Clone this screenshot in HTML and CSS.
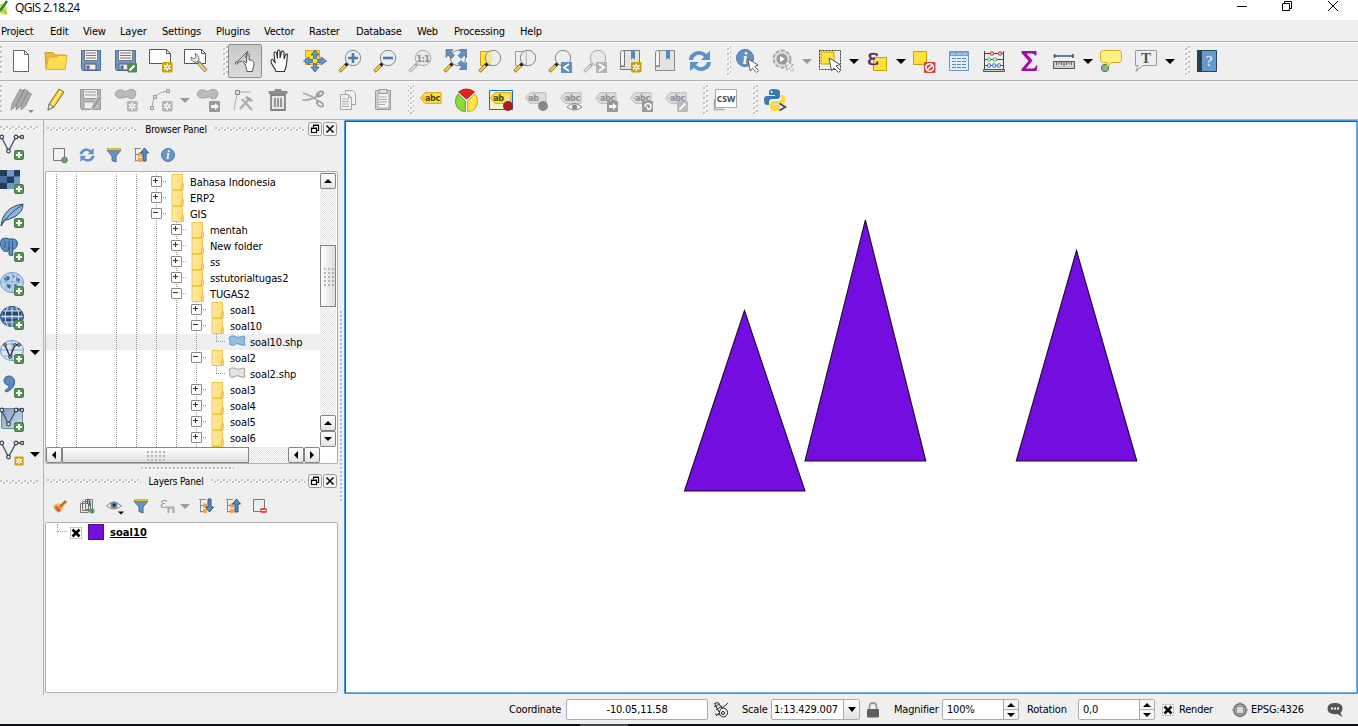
FILE: index.html
```html
<!DOCTYPE html>
<html lang="en">
<head>
<meta charset="utf-8">
<title>QGIS 2.18.24</title>
<link rel="stylesheet" href="styles.css">
</head>
<body>
<svg class="defs" width="0" height="0">
  <defs>
    <linearGradient id="g-folder" x1="0" x2="1"><stop offset="0" stop-color="#ffe9a2"/><stop offset="1" stop-color="#ffdc74"/></linearGradient>
    <linearGradient id="g-cond" x1="0" x2="1" y1="0" y2="1"><stop offset="0" stop-color="#7f9dc0"/><stop offset="1" stop-color="#d4e0ee"/></linearGradient>
    <pattern id="dots" width="6" height="5" patternUnits="userSpaceOnUse"><path fill="#fff" d="M1 1h2v2H1zM4 3h2v2H4z"/><path fill="#c2c2c2" d="M0 0h2v2H0zM3 2h2v2H3z"/></pattern>
    <pattern id="dots-1" width="4" height="4" patternUnits="userSpaceOnUse"><path fill="#fff" d="M1 1h2v2H1z"/><path fill="#bdbdbd" d="M0 0h2v2H0z"/></pattern>
    <symbol id="b-new" viewBox="0 0 12 12"><rect x=".5" y=".5" width="11" height="11" rx="1.5" fill="#c8a20c"/><path stroke="#fff" stroke-width="1.5" d="M6 2v8M2.5 4l7 4M9.5 4l-7 4"/><circle cx="6" cy="6" r="1" fill="#c8a20c"/></symbol>
    <symbol id="b-newg" viewBox="0 0 12 12"><rect x=".5" y=".5" width="11" height="11" rx="1.5" fill="#b4b4b4"/><path stroke="#fff" stroke-width="1.5" d="M6 2v8M2.5 4l7 4M9.5 4l-7 4"/><circle cx="6" cy="6" r="1" fill="#b4b4b4"/></symbol>
    <symbol id="b-plus" viewBox="0 0 10 10"><rect x=".5" y=".5" width="9" height="9" rx="1.5" fill="#589458" stroke="#457b45"/><path stroke="#fff" stroke-width="2" d="M5 2v6M2 5h6"/></symbol>
    <symbol id="lens" viewBox="0 0 24 24"><path d="M9 15 1.500 22.500" stroke="#7a6a3a" stroke-width="3.400"/><path d="M7.500 16.500 2 22" stroke="#ffc832" stroke-width="2.400"/><path d="M7.500 16.500l2.500-2.500" stroke="#222" stroke-width="3"/><circle cx="15" cy="9" r="7.700" fill="#e9eeee" fill-opacity=".85" stroke="#858585"/></symbol>
    <symbol id="lens-g" viewBox="0 0 24 24"><path d="M9 15 1.500 22.500" stroke="#a5a5a5" stroke-width="3.400"/><path d="M7.500 16.500 2 22" stroke="#ddd" stroke-width="1.800"/><circle cx="15" cy="9" r="7.700" fill="#e9e9e9" stroke="#aaa"/></symbol>
    <symbol id="cursor" viewBox="0 0 14 16"><path d="M1 1l11 6.500-4 1.500 4.500 4.500-2 2-4.500-4.500L3.500 14z" fill="#fff" stroke="#555"/></symbol>
    <symbol id="refresh" viewBox="0 0 24 24"><path d="M1 11C1 3 12-1 18 5l4-3v9h-9l3-3C12 4 6 6 5 11z" fill="#5d93c9"/><path d="M23 13c0 8-11 12-17 6l-4 3v-9h9l-3 3c4 4 10 2 11-3z" fill="#5d93c9"/></symbol>
    <symbol id="blob" viewBox="0 0 24 16"><path d="M1.500 8C0 3 6 .5 10 3c3 2 4-1.500 8-1.500 6 0 6 6 3 9-4 3-5-1-8-1-5 1.500-10 2-11.500-1.500z" fill="#bbb" stroke="#999"/></symbol>
    <symbol id="tag" viewBox="0 0 22 12"><path d="M.5 6 5 .7h16v10.600H5z"/><circle cx="4" cy="6" r=".8" fill="#fff"/></symbol>
    <symbol id="folder" viewBox="0 0 14 16"><path d="M1 .5h10.500v10l1-1v6H1z" fill="url(#g-folder)" stroke="#edc74e"/><path d="M10.500 10.500v5" stroke="#e0b840"/></symbol>
    <symbol id="vec" viewBox="0 0 24 20"><path d="M1.500 3 8.500 17 16 3h6" fill="none" stroke="#456" stroke-width="1.300"/><g fill="#dfe9f3" stroke="#345" stroke-width="1.200"><circle cx="1.800" cy="3" r="1.800"/><circle cx="8.500" cy="17" r="1.800"/><circle cx="16" cy="3" r="1.800"/><circle cx="22" cy="3" r="1.600"/></g></symbol>
    <symbol id="tree-ico" viewBox="0 0 16 16"><path d="M1 1.500h7M2.500 1v13.500M3 7.500h3M3 13.500h3" stroke="#888" fill="none"/><path d="M5 5.500h4v4H5zM5 11h4v4H5z" fill="#f3a43c"/></symbol>
    <symbol id="float" viewBox="0 0 14 14"><rect x=".5" y=".5" width="13" height="13" rx="2" fill="#f4f4f4" stroke="#999"/><path d="M5.500 5V3.500h5v5H9M5 3h6" fill="none" stroke="#000" stroke-width="1.200"/><path d="M3.500 6.500h5v4h-5zM3 6h6" fill="none" stroke="#000" stroke-width="1.200"/></symbol>
    <symbol id="close" viewBox="0 0 14 14"><rect x=".5" y=".5" width="13" height="13" rx="2" fill="#f4f4f4" stroke="#999"/><path d="M3.500 3.500l7 7m0-7l-7 7" stroke="#000" stroke-width="1.500"/></symbol>
    <symbol id="check" viewBox="0 0 12 12"><rect x=".5" y=".5" width="11" height="11" fill="#fff" stroke="#c4c4c4"/><path d="M2.500 2.500l7 7M9.500 2.500l-7 7" stroke="#000" stroke-width="2.600"/></symbol>
  </defs>
</svg>

<header class="titlebar">
  <svg class="applogo" width="10" height="16" viewBox="0 0 10 16"><path d="M0 4q4-1 6 3t0 7q-3 2-6-1z" fill="#cbe06a"/><path d="M0 11 7 1" stroke="#33802d" stroke-width="2.500"/><path d="M3 10l4 4" stroke="#b9c93c" stroke-width="2"/></svg>
  <span class="caption">QGIS 2.18.24</span>
  <svg class="wincontrols" width="110" height="14" viewBox="0 0 110 14" fill="none" stroke="#000"><path d="M1 6.500h10M46.500 3.500h7v7h-7zM48.500 3.500v-2h7v7h-2M92 1l10 10M102 1 92 11"/></svg>
</header>

<nav class="menubar">
  <span class="m49">Project</span><span class="m33">Edit</span><span class="m37">View</span><span class="m42">Layer</span><span class="m54">Settings</span><span class="m48">Plugins</span><span class="m45">Vector</span><span class="m47">Raster</span><span class="m61">Database</span><span class="m37">Web</span><span class="m66">Processing</span><span>Help</span>
</nav>

<div class="toolbar">
  <svg class="grip edge" width="4" height="30"><rect width="3" height="30" fill="url(#dots)"/></svg>
  <button class="tb"><svg viewBox="0 0 24 24"><path d="M4.500 1.500h11l4 4v17h-15z" fill="#fff" stroke="#666"/><path d="M15.500 1.500v4h4" fill="none" stroke="#666"/></svg></button>
  <button class="tb"><svg viewBox="0 0 24 24"><path d="M1 3.500h8l2 2.500h10v14H2z" fill="#e5b93a" stroke="#c8a030"/><path d="M4.500 8h8l2-1.500h8.500L21 20.500H2z" fill="#ffdc50" stroke="#dcae28"/></svg></button>
  <button class="tb"><svg viewBox="0 0 24 24"><path d="M2.500 1.500h19v20h-18l-1-2z" fill="#6f97c5" stroke="#456f9f"/><path d="M5.500 1.500h13v10h-13z" fill="#f5f5f5" stroke="#777"/><path d="M7 4h10M7 6.500h10M7 9h10" stroke="#777"/><path d="M6 15h11v6H6z" fill="#eee" stroke="#555"/><path d="M7.500 16.500h3v4h-3z" fill="#456f9f"/></svg></button>
  <button class="tb"><svg viewBox="0 0 24 24"><path d="M1.500 1.500h20v20h-19l-1-2z" fill="#6f97c5" stroke="#456f9f"/><path d="M4.500 1.500h14v10h-14z" fill="#f5f5f5" stroke="#777"/><path d="M6 4h11M6 6.500h11M6 9h11" stroke="#777"/><path d="M5 15h9v6H5z" fill="#eee" stroke="#555"/><path d="M6.500 16.500h3v4h-3z" fill="#456f9f"/><rect x="13.500" y="14" width="9.500" height="9.500" rx="1" fill="#528a52"/><path d="M15.500 21.500l5-5" stroke="#fff" stroke-width="2.200"/></svg></button>
  <button class="tb"><svg viewBox="0 0 24 24"><path d="M.5.500h17l4 4v10H.5z" fill="#fff" stroke="#555"/><path d="M17.500.500v4h4" fill="none" stroke="#555"/><use href="#b-new" x="12.500" y="12.500" width="11.500" height="11.500"/></svg></button>
  <button class="tb"><svg viewBox="0 0 24 24"><path d="M.5.500h17l4 4v10H.5z" fill="#fff" stroke="#555"/><path d="M17.500.500v4h4" fill="none" stroke="#555"/><path d="M14 13l8 9" stroke="#8a7640" stroke-width="4"/><path d="M15 14.500l6.500 7" stroke="#f0d890" stroke-width="2.200"/><path d="M7 8c0 4 3 6 6 5l2-2c0-4-2-6-4-6.500l1 4-2 1.500z" fill="#eee" stroke="#666"/></svg></button>
  <svg class="grip g14" width="14" height="30"><rect x="8" width="6" height="30" fill="url(#dots)"/></svg>
  <button class="tb pressed"><svg viewBox="0 0 24 24"><path d="M3 14 15 2M12 9l3-7M3 14l6-2" stroke="#555" fill="none" stroke-width=".9"/><circle cx="3.500" cy="14" r="1.200" fill="#fff" stroke="#555"/><path d="M12 15c-3-2-2-3.500-.5-2.500l2 1.500.5-8c.5-1.500 2-1.500 2 0v5c4 0 5 1.500 5 4 0 3-1.500 4-1.500 7.500h-5.500c-.5-3-1-5.500-2-7.500z" fill="#fff" stroke="#444" stroke-width=".9"/></svg></button>
  <button class="tb"><svg viewBox="0 0 24 24"><path d="M8 22.500c-1-4-5-7-5-10s2-3 3 0l1 1-1-9c0-2 2-2 2.500 0l1 5V2.500c0-2 2.500-2 2.500 0v6.500l1.500-6c.5-1.500 2.500-1 2.500.5V10l1.500-4c.5-1.500 2.500-1 2 .5-1 5 0 9-3 16z" fill="#fff" stroke="#333" stroke-width="1.100"/></svg></button>
  <button class="tb"><svg viewBox="0 0 24 24"><path d="M2.500 1.500h14v14h-14z" fill="#ffdc28" stroke="#d6a91a"/><path d="M12 1l4 5h-2.500v4.500H18V8l5.500 4-5.500 4v-2.500h-4.500V18H16l-4 5-4-5h2.500v-4.500H6V16L.500 12 6 8v2.500h4.500V6H8z" fill="#6a94c5" stroke="#36618f" stroke-width=".8"/><path d="M10 10h4v4h-4z" fill="#ffdc28"/></svg></button>
  <button class="tb"><svg viewBox="0 0 24 24"><use href="#lens"/><path d="M15 4v10M10 9h10" stroke="#4c79ad" stroke-width="2.600"/></svg></button>
  <button class="tb"><svg viewBox="0 0 24 24"><use href="#lens"/><path d="M10 9h10" stroke="#4c79ad" stroke-width="2.600"/></svg></button>
  <button class="tb"><svg viewBox="0 0 24 24"><use href="#lens-g"/><text class="one" x="15" y="12.500">1:1</text></svg></button>
  <button class="tb"><svg viewBox="0 0 24 24"><use href="#lens"/><path d="M3 .5h7L8 3l3.500 3.500-3 3L5 6 3 8.500zM23.500 .5h-7L18.500 3 15 6.500l3 3L21.500 6l2 2.500zM23.500 20.500h-7l2-2.500-3.500-3.500 3-3 3.500 3.500 2-2z" fill="#648fc1" stroke="#38628e" stroke-width=".6"/></svg></button>
  <button class="tb"><svg viewBox="0 0 24 24"><path d="M2.500 2.500h10v14h-10z" fill="#ffe23a" stroke="#c8a020"/><use href="#lens"/><path d="M14 2.500a6.700 6.700 0 0 0 0 13z" fill="#f3e98a"/></svg></button>
  <button class="tb"><svg viewBox="0 0 24 24"><path d="M2.500 2.500h10v14h-10z" fill="#eee" stroke="#999"/><use href="#lens"/><path d="M13.500 2.500v13" stroke="#bbb"/></svg></button>
  <button class="tb"><svg viewBox="0 0 24 24"><use href="#lens"/><path d="M13 13h11v11H13z" fill="#5f8dbf"/><path d="M21 15l-5 3.500 5 3.500" stroke="#fff" fill="none" stroke-width="1.800"/></svg></button>
  <button class="tb"><svg viewBox="0 0 24 24"><use href="#lens-g"/><path d="M13 13h11v11H13z" fill="#b5b5b5"/><path d="M16 15l5 3.500-5 3.500" stroke="#fff" fill="none" stroke-width="1.800"/></svg></button>
  <button class="tb"><svg viewBox="0 0 24 24"><path d="M6.500 1.500h15v19h-19v-3h4z" fill="#e4e4e4" stroke="#777"/><path d="M2.500 17.500v-14q0-2 2-2t2 2v14q-2-2-4 0z" fill="#f5f5f5" stroke="#777"/><path d="M13 1h4v10l-2-2-2 2z" fill="#5689bd"/><use href="#b-new" x="12.500" y="12.500" width="11.500" height="11.500"/></svg></button>
  <button class="tb"><svg viewBox="0 0 24 24"><path d="M6.500 1.500h15v20h-19v-4h4z" fill="#e4e4e4" stroke="#888"/><path d="M2.500 17.500v-14q0-2 2-2t2 2v14q-2-2-4 0z" fill="#f5f5f5" stroke="#888"/><path d="M13 1h4v10l-2-2-2 2z" fill="#5689bd"/></svg></button>
  <button class="tb"><svg viewBox="0 0 24 24"><use href="#refresh"/></svg></button>
  <svg class="grip g13" width="13" height="30"><rect x="8" width="5" height="30" fill="url(#dots)"/></svg>
  <button class="tb"><svg viewBox="0 0 24 24"><circle cx="9" cy="9" r="8.500" fill="#6292c5" stroke="#4b78aa"/><text class="info" x="9" y="14.500">i</text><use href="#cursor" x="11" y="9" width="13" height="15"/></svg></button>
  <button class="tb"><svg viewBox="0 0 24 24"><circle cx="11" cy="10" r="8.500" fill="#e0e0e0" stroke="#aaa" stroke-width="2" stroke-dasharray="4 1.500"/><circle cx="11" cy="10" r="5.500" fill="#999"/><path d="M9 7l5 3-5 3z" fill="#fff"/><use href="#cursor" x="13" y="10" width="11" height="13" opacity=".55"/></svg></button>
  <i class="drop grey"></i>
  <button class="tb"><svg viewBox="0 0 24 24"><path d="M1.500 1.500h21v19h-21z" fill="none" stroke="#333" stroke-dasharray="2 1"/><path d="M3 3h13v12H3z" fill="#ffe23a" stroke="#c7a006"/><use href="#cursor" x="10" y="8" width="14" height="16"/></svg></button>
  <i class="drop"></i>
  <button class="tb"><svg viewBox="0 0 24 24"><path d="M8.500 8.500h13v13h-13z" fill="#ffe23a" stroke="#c7a006"/><text class="eps" x="2" y="15.500">ε</text></svg></button>
  <i class="drop"></i>
  <button class="tb"><svg viewBox="0 0 24 24"><path d="M1.500 2.500h13v13h-13z" fill="#ffe23a" stroke="#c7a006"/><rect x="12" y="13" width="11.500" height="11" rx="1" fill="#d94343"/><circle cx="17.700" cy="18.500" r="3.800" fill="none" stroke="#fff" stroke-width="1.500"/><path d="M15 21l5.500-5" stroke="#fff" stroke-width="1.500"/></svg></button>
  <button class="tb"><svg viewBox="0 0 24 24"><path d="M2.500 2.500h19v19h-19z" fill="#e4eef9" stroke="#6797cc"/><path d="M3 3h18v4H3z" fill="#77a3d4"/><path d="M4 5h4.500M10 5h4.500M16 5h4" stroke="#d5e5f5"/><path d="M5 9.500h4M10 9.500h4M15 9.500h4M5 12.500h4M10 12.500h4M15 12.500h4M5 15.500h4M10 15.500h4M15 15.500h4M5 18.500h4M10 18.500h4M15 18.500h4" stroke="#5588bf"/></svg></button>
  <button class="tb"><svg viewBox="0 0 24 24"><path d="M2.500 2v19M21.500 2v19M2 4.500h20M2 10.500h20M2 16.500h20" stroke="#444"/><path d="M1.500 20.500h21v2h-21z" fill="#ccc" stroke="#555"/><g fill="#f6c4c4" stroke="#c03838"><circle cx="10" cy="4.500" r="1.800"/><circle cx="18" cy="4.500" r="1.800"/></g><g fill="#d7efd7" stroke="#5db35d"><circle cx="7" cy="10.500" r="1.800"/><circle cx="13" cy="10.500" r="1.800"/></g><g fill="#d3e3f3" stroke="#4a7bb0"><circle cx="7" cy="16.500" r="1.800"/><circle cx="12" cy="16.500" r="1.800"/><circle cx="17" cy="16.500" r="1.800"/></g></svg></button>
  <button class="tb"><svg viewBox="0 0 24 24"><path d="M4.500 2h15v4.500H18Q17.500 4.500 14.500 4.500H9.500l6 7-6.500 8h6.500q3 0 3.500-3h1.500l-1 5.500h-15V20l7-8-7-8z" fill="#a50ca5"/></svg></button>
  <button class="tb"><svg viewBox="0 0 24 24"><path d="M2 7h19M2.500 5v4M21 5v4" stroke="#36587f" stroke-width="1.600"/><path d="M1.500 12.500h21v7h-21z" fill="#cfcfcf" stroke="#555"/><path d="M4.500 13v3M7 13v2M9.500 13v3M12 13v4M14.500 13v3M17 13v2M19.500 13v3" stroke="#444" stroke-width=".8"/></svg></button>
  <i class="drop"></i>
  <button class="tb"><svg viewBox="0 0 24 24"><circle cx="6" cy="19" r="3.700" fill="#8ab58a" stroke="#548054"/><path d="M4.500 1.500h15q3 0 3 3v6q0 3-3 3h-7L8 18v-4.500H4.500q-3 0-3-3v-6q0-3 3-3z" fill="#fff084" stroke="#d0a822"/></svg></button>
  <button class="tb"><svg viewBox="0 0 24 24"><path d="M1.500 1.500h21v15H9l-7 6 2-6H1.500z" fill="#e8f0f4" stroke="#999"/><text class="tee" x="12" y="14">T</text></svg></button>
  <i class="drop"></i>
  <svg class="grip g14" width="14" height="30"><rect x="8" width="6" height="30" fill="url(#dots)"/></svg>
  <button class="tb"><svg viewBox="0 0 24 24"><path d="M2.500 1.500h19v21h-19z" fill="#6a98ca" stroke="#2f4458"/><path d="M2 1h5v22H2z" fill="#2b3e52"/><text class="help" x="14" y="17">?</text></svg></button>
</div>

<div class="toolbar second">
  <svg class="grip edge" width="4" height="30"><rect width="3" height="30" fill="url(#dots)"/></svg>
  <button class="tb"><svg viewBox="0 0 24 24"><g fill="#aaa" stroke="#888" stroke-width=".8"><path d="M2 22l1-6L11 1l4 2-8 15zM7 22l1-6L15 1l4 2-7 15zM12 22l1-6 6-12 3.500 2-6 12z"/></g><path d="M19 22h6l-3 3z" fill="#888"/></svg></button>
  <button class="tb"><svg viewBox="0 0 24 24"><path d="M4 22l1-6L15 1l5 3-10 15z" fill="#eacb3c" stroke="#8e791e"/><path d="M8 17l9-14" stroke="#fff18c" stroke-width="2"/><path d="M4 22l1-6 4.500 3z" fill="#eee" stroke="#777"/></svg></button>
  <button class="tb"><svg viewBox="0 0 24 24"><path d="M1.500 1.500h20v20h-19l-1-2z" fill="#b6b6b6" stroke="#999"/><path d="M4.500 1.500h14v9h-14z" fill="#eee" stroke="#999"/><path d="M6 4h11M6 7h11M5 14h10v7H5z" stroke="#999" fill="#eee"/><path d="M12 22l1-4 7-10 3 2-7 10z" fill="#999" stroke="#ddd" stroke-width=".7"/></svg></button>
  <button class="tb"><svg viewBox="0 0 24 24"><use href="#blob" width="23" height="15"/><use href="#b-newg" x="12.500" y="12.500" width="11.500" height="11.500"/></svg></button>
  <button class="tb"><svg viewBox="0 0 24 24"><path d="M3 20Q3 4 19 3" fill="none" stroke="#aaa"/><g fill="#ddd" stroke="#999"><path d="M1.500 18.500h3v3h-3zM4.500 7.500h3v3h-3zM17.500 1.500h3v3h-3z"/></g><use href="#b-newg" x="12.500" y="12.500" width="11.500" height="11.500"/></svg></button>
  <i class="drop grey"></i>
  <button class="tb"><svg viewBox="0 0 24 24"><use href="#blob" width="23" height="15"/><rect x="13" y="13" width="11" height="11" rx="1" fill="#999"/><path d="M15 17h4v-2l4 3.500-4 3.500v-2h-4z" fill="#fff"/></svg></button>
  <button class="tb"><svg viewBox="0 0 24 24"><path d="M3 22Q4 12 7 4h13" fill="none" stroke="#aaa"/><path d="M4.500 2.500h4v4h-4z" fill="#ddd" stroke="#888"/><path d="M11 11l10 11M19 10 9 21" stroke="#b0b0b0" stroke-width="2.400"/><path d="M15 9l6 4" stroke="#a5a5a5" stroke-width="2.600"/></svg></button>
  <button class="tb"><svg viewBox="0 0 24 24"><path d="M5 7h14v15H5z" fill="#e6e6e6" stroke="#858585" stroke-width="1.800"/><path d="M9 10v9M12 10v9M15 10v9" stroke="#858585" stroke-width="1.600"/><path d="M3 3.500h18v2H3zM9 3V1.500h6V3" fill="#999" stroke="#858585"/></svg></button>
  <button class="tb"><svg viewBox="0 0 24 24"><path d="M2 5q10 3 16 9M1 12q9 1 18-6" stroke="#aaa" stroke-width="1.700" fill="none"/><ellipse cx="19" cy="6" rx="3.500" ry="2" transform="rotate(-30 19 6)" fill="none" stroke="#999" stroke-width="1.600"/><ellipse cx="19" cy="16" rx="3.500" ry="2" transform="rotate(35 19 16)" fill="none" stroke="#999" stroke-width="1.600"/></svg></button>
  <button class="tb"><svg viewBox="0 0 24 24"><g fill="#f2f2f2" stroke="#a5a5a5"><path d="M9.500 2.500h7l3 3v11h-10z"/><path d="M4.500 6.500h8l3 3v12h-11z"/></g><path d="M6 11h7M6 13.500h7M6 16h7M6 18.500h7M12.500 6.500v3h3" fill="none" stroke="#aaa"/></svg></button>
  <button class="tb"><svg viewBox="0 0 24 24"><path d="M4.500 2.500h15v19h-15z" fill="#d0d0d0" stroke="#999"/><path d="M7 5h10l1 2v13H7z" fill="#f4f4f4" stroke="#aaa"/><path d="M8 1.500h8v4H8z" fill="#ddd" stroke="#999"/><path d="M8 9h8M8 11.500h8M8 14h8M8 16.500h6" stroke="#aaa"/></svg></button>
  <svg class="grip g13" width="13" height="30"><rect x="7" width="6" height="30" fill="url(#dots)"/></svg>
  <button class="tb"><svg viewBox="0 0 24 24"><use href="#tag" class="ytag" x="1" y="4" width="22" height="12"/><text class="abc" x="13.500" y="13">abc</text></svg></button>
  <button class="tb"><svg viewBox="0 0 24 24"><g transform="translate(12.500 12)" stroke-width=".9"><path d="M0-1-8-8Q0-14 8-8z" fill="#e02222" stroke="#9c1515"/><path d="M-1.200 1v10.500Q-10 11-11 2q0-5 2.500-8z" fill="#8fdc38" stroke="#4c9c22"/><path d="M1.200 1v10.500Q10 11 11 2q0-5-2.500-8z" fill="#ffe448" stroke="#c19c18"/></g></svg></button>
  <button class="tb"><svg viewBox="0 0 24 24"><path d="M.5 2.500h23v19H.5z" fill="#f5f1cd" stroke="#1769d2"/><use href="#tag" class="ytag" x="1" y="4" width="22" height="12"/><text class="abc" x="9.500" y="13">ab</text><path d="M16 10q3-4 4 0v6h-4z" fill="#ddd"/><circle cx="19" cy="18" r="5" fill="#a52020"/></svg></button>
  <button class="tb"><svg viewBox="0 0 24 24"><use href="#tag" class="gtag" x="1" y="4" width="22" height="12"/><text class="abc dim" x="9.500" y="13">ab</text><path d="M16 10q3-4 4 0v6h-4z" fill="#ddd"/><circle cx="19" cy="18" r="5" fill="#888"/></svg></button>
  <button class="tb"><svg viewBox="0 0 24 24"><use href="#tag" class="gtag" x="1" y="4" width="22" height="12"/><text class="abc dim" x="13.500" y="13">abc</text><path d="M8 19q7-7 15 0-8 6-15 0z" fill="#f4f4f4" stroke="#888"/><circle cx="15.500" cy="19" r="2.500" fill="#888"/></svg></button>
  <button class="tb"><svg viewBox="0 0 24 24"><use href="#tag" class="gtag" x="1" y="4" width="22" height="12"/><text class="abc dim" x="13.500" y="13">abc</text><rect x="13" y="13" width="11" height="11" rx="1" fill="#999"/><path d="M15 17h4v-2l4 3.500-4 3.500v-2h-4z" fill="#fff"/></svg></button>
  <button class="tb"><svg viewBox="0 0 24 24"><use href="#tag" class="gtag" x="1" y="4" width="22" height="12"/><text class="abc dim" x="13.500" y="13">abc</text><rect x="13" y="13" width="11" height="11" rx="1" fill="#999"/><path d="M16 19q0-3.500 3-3.500 3 0 3 3t-3 3l-1-3" stroke="#fff" stroke-width="1.500" fill="none"/></svg></button>
  <button class="tb"><svg viewBox="0 0 24 24"><use href="#tag" class="gtag" x="1" y="4" width="22" height="12"/><text class="abc dim" x="13.500" y="13">abc</text><rect x="13" y="13" width="11" height="11" rx="1" fill="#bbb"/><path d="M15.500 21.500l6-6" stroke="#fff" stroke-width="2"/></svg></button>
  <svg class="grip g15" width="15" height="30"><rect x="9" width="6" height="30" fill="url(#dots)"/></svg>
  <button class="tb"><svg viewBox="0 0 24 24"><path d="M.5 11v10.500h10" fill="none" stroke="#aaa" stroke-width="1.500"/><path d="M1.500 1.500h21v18h-21z" fill="#fff" stroke="#aaa"/><text class="csw" x="12" y="14">CSW</text></svg></button>
  <svg class="grip g14" width="14" height="30"><rect x="8" width="6" height="30" fill="url(#dots)"/></svg>
  <button class="tb"><svg viewBox="0 0 24 24"><path d="M11 1c-4 0-5 1-5 3v3h6v1H4C1 8 1 11 1 12c0 3 1 5 3 5h2v-3q0-3 3-3h5q3 0 3-3V4q0-3-6-3z" fill="#397bab"/><path d="M12 23c4 0 5-1 5-3v-3h-6v-1h8c3 0 3.500-3 3.500-4.500 0-3-1-4.500-3.500-4.500h-1v3q0 3-3 3h-5q-3 0-3 3v4q0 3 5 3z" fill="#ffd945"/><circle cx="8.500" cy="4" r="1" fill="#fff"/><path d="M16.500 15.500l6 3.500-6 3.500" stroke="#444" stroke-width="1.500" fill="none"/></svg></button>
</div>

<main class="workspace">
  <aside class="layerbar">
    <svg class="hgrip" width="38" height="5"><rect width="38" height="5" fill="url(#dots)"/></svg>
    <div class="lb"><svg viewBox="0 0 24 24"><use href="#vec" width="24" height="20" y="-2"/><use href="#b-plus" x="14" y="14" width="10" height="10"/></svg></div>
    <div class="lb"><svg viewBox="0 0 24 24"><path d="M0 0h20v19H0z" fill="#6f9acb"/><path d="M0 0h7v6.500H0zM14 0h6v6.500h-6zM7 6.500h7V13H7zM0 13h7v6H0z" fill="#263d5a"/><path d="M0 6.500h7V13H0z" fill="#466f9f"/><use href="#b-plus" x="14" y="14" width="10" height="10"/></svg></div>
    <div class="lb"><svg viewBox="0 0 24 24"><path d="M1 22Q2 12 8 6.500 13 1.500 23 0q0 8-8 12.500-5 3-11 4z" fill="#8fb3da" stroke="#2e4c70"/><path d="M1 22Q8 10 22 1" fill="none" stroke="#2e4c70"/><use href="#b-plus" x="14" y="14" width="10" height="10"/></svg></div>
    <div class="lb"><svg viewBox="0 0 24 24"><path d="M2 1q4-2 7 0 8-1 8.500 4-.5 6-4.500 6l-.500 6.500-3.500-.5V9l-1 4q-5 2-7-4-2-5 1-8z" fill="#5f8fc4" stroke="#2f5683"/><path d="M5 3v7M12.500 3v8M9 3v6" stroke="#2f5683"/><use href="#b-plus" x="14" y="14" width="10" height="10"/></svg><i class="drop"></i></div>
    <div class="lb"><svg viewBox="0 0 24 24"><ellipse cx="12" cy="10.500" rx="11.500" ry="10" fill="#bed6ef" stroke="#6f9bd0"/><path d="M4 6l3-2 3 1-1 3-3 1-2-1zM12 3l3 1-1 2zM16 5l4 2-1 4-3-2zM7 12l4 1-1 4-3-2zM14 12l4 1-3 4z" fill="#41678f"/><path d="M1 10h22M12 1v19M6 2v17M17 2v17" stroke="#8eb1db"/><use href="#b-plus" x="14" y="14" width="10" height="10"/></svg><i class="drop"></i></div>
    <div class="lb"><svg viewBox="0 0 24 24"><ellipse cx="12" cy="10.500" rx="11.500" ry="10" fill="#4f7eb3" stroke="#27466b"/><path d="M3 5h18v4H3zM2 13h19v3H4z" fill="#27466b"/><path d="M1 10.500h22M3 5h18M4 16h16M12 1v20M8 1Q2 10 8 20M16 1q6 9 0 19" fill="none" stroke="#d5e5f5"/><use href="#b-plus" x="14" y="14" width="10" height="10"/></svg></div>
    <div class="lb"><svg viewBox="0 0 24 24"><ellipse cx="12" cy="10.500" rx="11.500" ry="10" fill="#dce9f7" stroke="#6093cf"/><path d="M1 10h22M4 4h16M4 16h16M12 1v19" stroke="#7aa5d8"/><path d="M5 5l5 12 5-12h4" fill="none" stroke="#333" stroke-width="1.400"/><g fill="#fff" stroke="#222"><circle cx="5" cy="5" r="1.300"/><circle cx="10" cy="17" r="1.300"/><circle cx="15" cy="5" r="1.300"/><circle cx="19" cy="5" r="1.300"/></g><use href="#b-plus" x="14" y="14" width="10" height="10"/></svg><i class="drop"></i></div>
    <div class="lb"><svg viewBox="0 0 24 24"><path d="M9 2c4 0 7 4 5 9-1 3-4 6-8 7l-1-1.500c3-1.500 4-3.500 4-5.500-3 .5-5-2-5-4.500S6 2 9 2z" fill="#5b89ba" stroke="#3c618b"/><use href="#b-plus" x="14" y="14" width="10" height="10"/></svg></div>
    <div class="lb"><svg viewBox="0 0 24 24"><rect x="1.500" y=".5" width="21" height="20" rx="1" fill="url(#g-cond)" stroke="#6e8aa8"/><use href="#vec" width="24" height="20" y="-1"/><use href="#b-plus" x="14" y="14" width="10" height="10"/></svg></div>
    <div class="lb"><svg viewBox="0 0 24 24"><use href="#vec" width="24" height="20" y="-2"/><use href="#b-new" x="14" y="14" width="10" height="10"/></svg><i class="drop"></i></div>
    <svg class="hgrip end" width="38" height="5"><rect width="38" height="5" fill="url(#dots)"/></svg>
  </aside>

  <section class="docks">
    <div class="docktitle"><svg width="90" height="5"><rect width="90" height="5" fill="url(#dots)"/></svg><span>Browser Panel</span><svg width="90" height="5"><rect width="90" height="5" fill="url(#dots)"/></svg><svg class="db" width="14" height="14"><use href="#float"/></svg><svg class="db" width="14" height="14"><use href="#close"/></svg></div>
    <div class="docktools">
      <svg viewBox="0 0 16 16"><path d="M1.500 1.500h11v12h-11z" fill="#f2f2f2" stroke="#777"/><circle cx="12.500" cy="13" r="2.800" fill="#6ea56e" stroke="#4a844a"/></svg>
      <svg viewBox="0 0 16 16"><use href="#refresh" width="16" height="16"/></svg>
      <svg viewBox="0 0 16 16"><path d="M1 3h14l-5 6v6l-4-1.500V9z" fill="#6993c2" stroke="#426a98"/><path d="M1.500 1.500h13v1.500h-13z" fill="#ffe23a" stroke="#b79c1c" stroke-width=".7"/></svg>
      <svg viewBox="0 0 16 16"><use href="#tree-ico" width="16" height="16"/><path d="M11.500 1l4 5H13v8h-3V6H7.500z" fill="#5b8bbe" stroke="#2d557f"/></svg>
      <svg viewBox="0 0 16 16"><circle cx="8" cy="8" r="6.500" fill="#6695c7" stroke="#517ba9"/><text class="info sm" x="8" y="12">i</text></svg>
    </div>
    <div class="browser">
      <div class="view">
        <ul class="tree">
          <li><i></i><i></i><b></b><i></i><i></i><em class="plus"></em><svg><use href="#folder"/></svg>Bahasa Indonesia</li>
          <li><i></i><i></i><b></b><i></i><i></i><em class="plus"></em><svg><use href="#folder"/></svg>ERP2</li>
          <li><i></i><i></i><b></b><i></i><i></i><em class="minus"></em><svg><use href="#folder"/></svg>GIS</li>
          <li><i></i><i></i><b></b><i></i><i></i><i></i><em class="plus"></em><svg><use href="#folder"/></svg>mentah</li>
          <li><i></i><i></i><b></b><i></i><i></i><i></i><em class="plus"></em><svg><use href="#folder"/></svg>New folder</li>
          <li><i></i><i></i><b></b><i></i><i></i><i></i><em class="plus"></em><svg><use href="#folder"/></svg>ss</li>
          <li><i></i><i></i><b></b><i></i><i></i><i></i><em class="plus"></em><svg><use href="#folder"/></svg>sstutorialtugas2</li>
          <li><i></i><i></i><b></b><i></i><i></i><i></i><em class="minus"></em><svg><use href="#folder"/></svg>TUGAS2</li>
          <li><i></i><i></i><b></b><i></i><i></i><i></i><i></i><em class="plus"></em><svg><use href="#folder"/></svg>soal1</li>
          <li><i></i><i></i><b></b><i></i><i></i><i></i><i></i><em class="minus"></em><svg><use href="#folder"/></svg>soal10</li>
          <li class="current"><i></i><i></i><b></b><i></i><i></i><i></i><i></i><i></i><em class="leaf"></em><svg class="shp" viewBox="0 0 18 16"><path d="M1 4q1-3 5-2 3 2 6 1 4-2 5 0-2 4 0 8-3 1-6-1-3-1-5 1-5 1-4-2 0-2-1-5z" fill="#94bfe4" stroke="#6c96ba"/></svg>soal10.shp</li>
          <li><i></i><i></i><b></b><i></i><i></i><i></i><i></i><em class="minus"></em><svg><use href="#folder"/></svg>soal2</li>
          <li><i></i><i></i><b></b><i></i><i></i><i></i><i></i><i></i><em class="leaf"></em><svg class="shp" viewBox="0 0 18 16"><path d="M1 4q1-3 5-2 3 2 6 1 4-2 5 0-2 4 0 8-3 1-6-1-3-1-5 1-5 1-4-2 0-2-1-5z" fill="#e4e4e4" stroke="#9a9a9a"/></svg>soal2.shp</li>
          <li><i></i><i></i><b></b><i></i><i></i><i></i><i></i><em class="plus"></em><svg><use href="#folder"/></svg>soal3</li>
          <li><i></i><i></i><b></b><i></i><i></i><i></i><i></i><em class="plus"></em><svg><use href="#folder"/></svg>soal4</li>
          <li><i></i><i></i><b></b><i></i><i></i><i></i><i></i><em class="plus"></em><svg><use href="#folder"/></svg>soal5</li>
          <li><i></i><i></i><b></b><i></i><i></i><i></i><i></i><em class="plus"></em><svg><use href="#folder"/></svg>soal6</li>
          <li><i></i><i></i><b></b><i></i><i></i><i></i><i></i><em></em><svg><use href="#folder"/></svg></li>
        </ul>
        <div class="vscroll"><span class="sbtn up"></span><span class="thumb"></span><span class="sbtn up last"></span><span class="sbtn down"></span></div>
      </div>
      <div class="hscroll"><span class="sbtn left"></span><span class="thumb"></span><span class="sbtn left last"></span><span class="sbtn right"></span></div>
    </div>
    <svg class="splitgrip" width="93" height="3"><rect width="93" height="3" fill="url(#dots-1)"/></svg>
    <div class="docktitle layers"><svg width="94" height="5"><rect width="94" height="5" fill="url(#dots)"/></svg><span>Layers Panel</span><svg width="94" height="5"><rect width="94" height="5" fill="url(#dots)"/></svg><svg class="db" width="14" height="14"><use href="#float"/></svg><svg class="db" width="14" height="14"><use href="#close"/></svg></div>
    <div class="docktools layers">
      <svg viewBox="0 0 16 16"><path d="M1 7l6-2 5 5-5 5q-4-1-6-8z" fill="#f2bd52"/><path d="M2 9l4-1 3 5-3 1z" fill="#df584e"/><path d="M8 9l6-6" stroke="#b77a29" stroke-width="3"/></svg>
      <svg viewBox="0 0 16 16"><path d="M1.500 5.500h8v9h-8zM3.500 3.500h8v9h-8zM6.500 1.500h7v10h-7z" fill="#e7e7e7" stroke="#777"/><path d="M8.500 6V2q0-2 2 0v6" fill="none" stroke="#365f87"/><circle cx="13" cy="13" r="2.500" fill="#579657"/></svg>
      <svg class="eye" viewBox="0 0 16 16"><path d="M.5 8q7-8 15 0-8 6-15 0z" fill="#eee" stroke="#888"/><circle cx="8" cy="7" r="3.500" fill="#6186aa"/><circle cx="8" cy="7" r="1.500" fill="#223"/><path d="M12 13.500h6l-3 3z" fill="#000"/></svg>
      <svg viewBox="0 0 16 16"><path d="M1 3h14l-5 6v6l-4-1.500V9z" fill="#6993c2" stroke="#426a98"/><path d="M1.500 1.500h13v1.500h-13z" fill="#ffe23a" stroke="#b79c1c" stroke-width=".7"/></svg>
      <svg viewBox="0 0 16 16"><text class="epsg" x="0" y="10">ε</text><path d="M8.500 15V9.500h5V15" fill="none" stroke="#aaa" stroke-width="2"/></svg>
      <i class="drop grey"></i>
      <svg viewBox="0 0 16 16"><use href="#tree-ico" width="16" height="16"/><path d="M11.500 14l4-5H13V1h-3v8H7.500z" fill="#5b8bbe" stroke="#2d557f"/></svg>
      <svg viewBox="0 0 16 16"><use href="#tree-ico" width="16" height="16"/><path d="M11.500 1l4 5H13v8h-3V6H7.500z" fill="#5b8bbe" stroke="#2d557f"/></svg>
      <svg viewBox="0 0 16 16"><path d="M1.500 1.500h11v12h-11z" fill="#eee" stroke="#777"/><rect x="8" y="10" width="7" height="5" rx="2" fill="#e34d4d"/><path d="M9.500 12.500h4" stroke="#fff"/></svg>
    </div>
    <div class="layertree"><i class="elbow"></i><svg class="chk" width="12" height="12"><use href="#check"/></svg><span class="swatch"></span><span class="lname">soal10</span></div>
  </section>
  <div class="vsplit"><svg width="3" height="190"><rect width="3" height="190" fill="url(#dots-1)"/></svg></div>

  <section class="canvas">
    <svg width="1010" height="570" viewBox="346 122 1010 570"><g fill="#740ddf" stroke="#1c0a2c" stroke-width="1.100"><path d="M744.500 310.500 684.500 491H805zM865.400 220 805 461h120.800zM1076.500 250.500 1016.300 461h120.500z"/></g></svg>
  </section>
</main>

<footer class="statusbar">
  <span class="lbl coord-l">Coordinate</span><span class="field coord">-10.05,11.58</span>
  <svg class="mouse" width="16" height="16" viewBox="0 0 16 16"><g fill="#eee" stroke="#222"><path d="M1.500 1.500l3.500-1 5 7-4 2.500z"/><ellipse cx="10.500" cy="10.500" rx="4" ry="4.500"/><circle cx="10" cy="11" r="1.500"/></g><path d="M1 5l6-3M3 8l6-4M9 6l6-5M2 12l5 1M3 14l4-4" stroke="#333"/></svg>
  <span class="lbl scale-l">Scale</span><span class="field combo"><span>1:13.429.007</span><i></i></span>
  <svg class="lock" width="12" height="16" viewBox="0 0 12 16"><path d="M2.500 8V4.500q0-3.500 3.500-3.500t3.500 3.500V8" fill="none" stroke="#999" stroke-width="1.800"/><rect y="7" width="12" height="8.500" rx="1" fill="#5f5f5f"/></svg>
  <span class="lbl mag-l">Magnifier</span><span class="field spin"><span>100%</span><i class="u"></i><i class="d"></i></span>
  <span class="lbl rot-l">Rotation</span><span class="field spin"><span>0,0</span><i class="u"></i><i class="d"></i></span>
  <svg class="rchk" width="12" height="12"><use href="#check"/></svg><span class="lbl ren-l">Render</span>
  <svg class="globe" width="16" height="16" viewBox="0 0 16 16"><circle cx="8" cy="8" r="6" fill="#ddd" stroke="#777" stroke-width="2"/><path d="M8 0v16M0 8h16" stroke="#888"/><rect x="4.500" y="4.500" width="7" height="7" rx="1.500" fill="#ddd" stroke="#888"/></svg>
  <span class="lbl">EPSG:4326</span>
  <svg class="bubble" width="16" height="16" viewBox="0 0 16 16"><path d="M8 1q7.500 0 7.500 5.500 0 3-2 4.500l2 4-5-3Q.5 13 .5 6.500.5 1 8 1z" fill="#555"/><path d="M4 6.500h2M7 6.500h2M10 6.500h2" stroke="#fff" stroke-width="2"/></svg>
</footer>
<div class="taskedge"><span></span></div>
</body>
</html>
```

FILE: styles.css
```css
* { box-sizing: border-box; }
body {
  margin: 0; width: 1358px; height: 726px; overflow: hidden;
  display: flex; flex-direction: column;
  background: #efefef; color: #000;
  font: 11px/16px "DejaVu Sans Condensed", "DejaVu Sans", sans-serif;
  letter-spacing: -.2px;
}
svg { display: block; flex: none; }
.defs { position: absolute; }
button { border: 0; background: none; padding: 0; margin: 0; font: inherit; }

.titlebar { height: 20px; flex: none; background: #fff; display: flex; align-items: flex-start; }
.applogo { margin-right: 5px; }
.caption { font: 12px/16px "Open Sans", "Noto Sans", sans-serif; letter-spacing: -.6px; }
.wincontrols { margin: 0 12px 0 auto; }

.menubar { height: 21px; flex: none; display: flex; padding-left: 1px; line-height: 23px; }
.menubar span { white-space: nowrap; }
.m33 { width: 33px; } .m37 { width: 37px; } .m42 { width: 42px; } .m45 { width: 45px; }
.m47 { width: 47px; } .m48 { width: 48px; } .m49 { width: 49px; } .m54 { width: 54px; }
.m61 { width: 61px; } .m66 { width: 66px; }

.toolbar {
  height: 39px; flex: none; display: flex; align-items: center;
  border-top: 1px solid #b2b2b2; box-shadow: inset 0 1px #f8f8f8;
}
.toolbar.second { height: 40px; border-bottom: 1px solid #b2b2b2; }
.tb { width: 35px; height: 34px; flex: none; display: flex; align-items: center; justify-content: center; }
.tb svg { width: 24px; height: 24px; margin-right: 1px; overflow: visible; }
.pressed { width: 34px; margin-right: 1px; background: linear-gradient(#c9c9c9, #dadada); border: 1px solid #8c8c8c; border-radius: 2px; }
.drop { width: 12px; flex: none; display: flex; justify-content: center; }
.drop::after { content: ""; margin-right: 1px; border: 5px solid transparent; border-top-color: #000; border-bottom: 0; }
.drop.grey::after { border-top-color: #9a9a9a; }

text { letter-spacing: 0; }
.one { font: bold 9px "DejaVu Sans Condensed", sans-serif; text-anchor: middle; fill: #888; letter-spacing: -.5px; }
.info { font: italic bold 16px "Liberation Serif", serif; text-anchor: middle; fill: #fff; }
.info.sm { font-size: 12px; }
.eps { font: 23px "DejaVu Serif", serif; fill: #5b2c66; stroke: #5b2c66; stroke-width: .5px; }
.epsg { font: 15px "DejaVu Serif", serif; fill: #999; }
.tee { font: bold 15px "Liberation Serif", serif; text-anchor: middle; fill: #555; }
.help { font: 15px "Liberation Serif", serif; text-anchor: middle; fill: #fff; }
.abc { font: bold 9px "DejaVu Sans Condensed", sans-serif; text-anchor: middle; fill: #4d4420; letter-spacing: -.4px; }
.abc.dim { fill: #8c8c8c; }
.csw { font: bold 8.500px "Open Sans", sans-serif; text-anchor: middle; fill: #444; }
.ytag { fill: #ffe23a; stroke: #cfa514; }
.gtag { fill: #ddd; stroke: #bbb; }

.workspace { height: 575px; flex: none; display: flex; }
.layerbar { width: 44px; flex: none; border-right: 1px solid #b2b2b2; display: flex; flex-direction: column; }
.hgrip { margin: 6px 0 0; }
.hgrip.end { margin-top: 9px; }
.lb { height: 34px; flex: none; display: flex; align-items: center; }
.lb svg { width: 24px; height: 24px; overflow: visible; }
.lb .drop { margin-left: 5px; }

.docks { width: 293px; margin-left: 1px; flex: none; display: flex; flex-direction: column; }
.docktitle { height: 18px; flex: none; display: flex; align-items: center; padding: 0 1px 0 2px; }
.docktitle span { flex: 1; text-align: center; white-space: nowrap; font-size: 10px; line-height: 17px; letter-spacing: -.15px; }
.docktitle .db { margin-left: 1px; }
.docktitle svg:nth-of-type(3) { margin-left: 3px; }
.docktools { height: 33px; flex: none; display: flex; align-items: center; gap: 11px; padding-left: 7px; }
.docktools svg { width: 16px; height: 16px; overflow: visible; }
.browser { height: 293px; flex: none; border: 1px solid #b0b0b0; border-radius: 2px; background: #fff; display: flex; flex-direction: column; }
.view { height: 275px; flex: none; display: flex; overflow: hidden; }
.tree { list-style: none; margin: 0; padding: 2px 0 0; width: 274px; overflow: hidden; }
.tree li { height: 16px; display: flex; padding-left: 10px; white-space: nowrap; font-size: 11px; line-height: 17px; letter-spacing: -.1px; }
.tree i, .tree b, .tree em { width: 20px; height: 16px; flex: none; }
.tree i, .tree em { background: repeating-linear-gradient(#999 0 1px, transparent 1px 2px) 0 0 / 1px 16px no-repeat; }
.tree em { width: 15px; position: relative; }
.tree em::before { content: ""; position: absolute; left: 5px; top: 7px; width: 5px; height: 1px; background: repeating-linear-gradient(90deg, #999 0 1px, transparent 1px 2px); }
.plus::after, .minus::after {
  content: ""; position: absolute; left: -5px; top: 2px; width: 9px; height: 9px; border: 1px solid #8a8a8a; border-radius: 1px;
  background: linear-gradient(#333, #333) 1px 3px / 5px 1px no-repeat, linear-gradient(#333, #333) 3px 1px / 1px 5px no-repeat, #fff;
}
.minus::after { background: linear-gradient(#333, #333) 1px 3px / 5px 1px no-repeat, #fff; }
.tree em.leaf { background-size: 1px 8px; }
.tree em.leaf::before { left: 0; width: 10px; }
.tree svg { width: 14px; height: 16px; margin-right: 5px; }
.tree svg.shp { width: 18px; margin: 0 4px 0 -3px; }
.current { background: #efefef; }

.vscroll, .hscroll { background: repeating-conic-gradient(#f8f8f8 0 25%, #e6e6e6 0 50%) 0 0 / 2px 2px; display: flex; flex: none; }
.vscroll { width: 16px; flex-direction: column; padding-top: 1px; }
.hscroll { height: 16px; width: 274px; }
.sbtn { width: 16px; height: 16px; flex: none; background: linear-gradient(#fff, #e4e4e4); border: 1px solid #858585; border-radius: 2px; display: flex; align-items: center; justify-content: center; }
.sbtn::after { content: ""; border: 4px solid transparent; }
.up::after { border-bottom-color: #000; border-top: 0; }
.down::after { border-top-color: #000; border-bottom: 0; }
.left::after { border-right-color: #000; border-left: 0; }
.right::after { border-left-color: #000; border-right: 0; }
.sbtn.last { margin: auto 0 0; }
.hscroll .sbtn.last { margin: 0 0 0 auto; }
.thumb { border: 1px solid #858585; display: flex; align-items: center; justify-content: center; }
.vscroll .thumb { height: 62px; margin-top: 56px; background: linear-gradient(90deg, #fff, #dedede); }
.hscroll .thumb { width: 187px; background: linear-gradient(#fff, #dedede); }
.thumb::after { content: ""; background: radial-gradient(circle, #b5b5b5 1px, transparent 1.200px) 0 0 / 4px 4px; width: 19px; height: 11px; }
.vscroll .thumb::after { width: 11px; height: 19px; }

.splitgrip { margin: 3px 0 2px 96px; }
.docktools.layers { height: 32px; }
.docktools .drop { margin: 0 -4px 0 -7px; width: 11px; }
.layertree { height: 171px; flex: none; border: 1px solid #b0b0b0; border-radius: 2px; background: #fff; display: flex; align-items: flex-start; padding: 1px 0 0 11px; }
.elbow { width: 10px; height: 8px; border-left: 1px dotted #999; border-bottom: 1px dotted #999; }
.chk { margin: 3px 0 0 3px; }
.swatch { width: 16px; height: 16px; margin: 0 6px; background: #740ddf; border: 1px solid #4f0b96; }
.lname { font-weight: bold; text-decoration: underline; line-height: 18px; letter-spacing: .05px; }

.vsplit { width: 6px; flex: none; padding: 191px 0 0 2px; }
.canvas { width: 1014px; height: 574px; flex: none; background: #fff; border: 1px solid #3f97df; border-radius: 1px; padding: 1px; box-shadow: inset 1px 1px #0b66b2, inset -1px -1px #70b4ea; }

.statusbar { height: 29px; flex: none; display: flex; align-items: center; padding-left: 509px; font-size: 11px; }
.lbl { white-space: nowrap; flex: none; }
.coord-l { width: 57px; } .scale-l { width: 29px; } .mag-l { width: 48px; } .rot-l { width: 51px; } .ren-l { width: 53px; }
.field { height: 21px; flex: none; background: #fff; border: 1px solid #ababab; border-radius: 2px; line-height: 20px; white-space: nowrap; }
.coord { width: 142px; text-align: center; }
.mouse { margin: 0 13px 0 5px; }
.combo { width: 89px; display: flex; padding-left: 2px; overflow: hidden; }
.combo span { width: 69px; }
.combo i { flex: 1; border-left: 1px solid #ababab; background: linear-gradient(#fff, #e2e2e2); display: flex; align-items: center; justify-content: center; }
.combo i::after { content: ""; border: 4px solid transparent; border-top: 5px solid #000; border-bottom: 0; }
.lock { margin: 0 15px 0 7px; }
.spin { width: 77px; display: grid; grid-template: 10px 9px / 1fr 15px; padding-left: 4px; margin-right: 8px; }
.spin span { grid-row: 1 / 3; }
.spin i { border-left: 1px solid #ababab; background: #f6f6f6; display: flex; align-items: center; justify-content: center; }
.spin i::after { content: ""; border: 4px solid transparent; }
.spin .u { border-bottom: 1px solid #ababab; }
.spin .u::after { border-bottom-color: #000; border-top: 0; }
.spin .d::after { border-top-color: #000; border-bottom: 0; }
.rchk { margin: 0 5px 0 -1px; }
.globe { margin-right: 3px; }
.bubble { margin: 0 15px 0 auto; }
.taskedge { height: 2px; flex: none; background: #08131e; padding-left: 580px; }
.taskedge span { display: block; width: 48px; height: 2px; background: #3d4750; }
```
